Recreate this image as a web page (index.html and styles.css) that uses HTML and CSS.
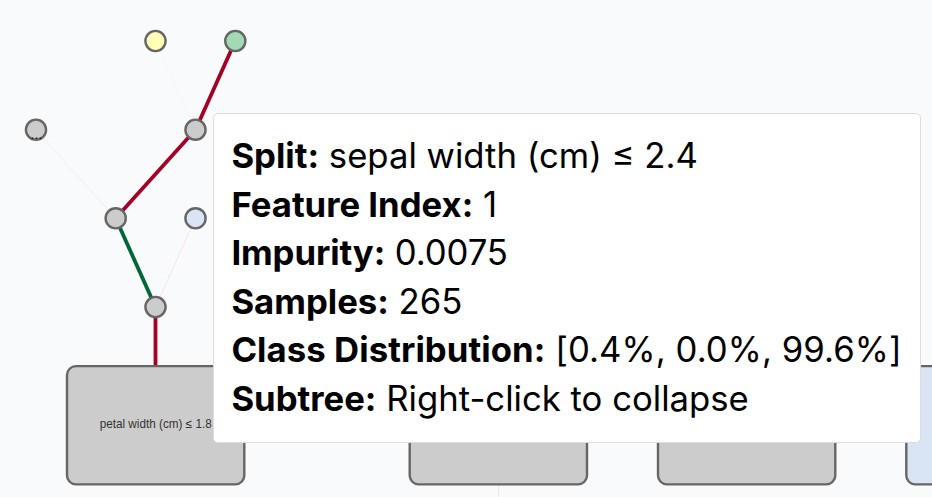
FILE: index.html
```html
<!DOCTYPE html>
<html lang="en">
<head>
<meta charset="utf-8">
<title>Decision tree</title>
<link rel="stylesheet" href="styles.css">
</head>
<body>
<svg class="tree" width="932" height="497" viewBox="0 0 932 497">
  <g class="faint">
    <path class="faintest" d="M155.5 41L195.5 129.7"/>
    <path d="M36 129.7L115.7 218.3"/>
    <path class="warm" d="M195.5 218.3L155.5 307"/>
    <path class="warm" d="M498.5 425V497"/>
  </g>
  <g class="path">
    <path d="M235.3 41L195.5 129.7L115.7 218.3"/>
    <path class="yes" d="M115.7 218.3L155.5 307"/>
    <path d="M155.5 307V425"/>
  </g>
  <g class="node">
    <circle class="yellow" cx="155.5" cy="41" r="10.1"/>
    <circle class="green" cx="235.3" cy="41" r="10.1"/>
    <circle cx="36" cy="129.7" r="10.1"/>
    <circle cx="195.5" cy="129.7" r="10.1"/>
    <circle cx="115.7" cy="218.3" r="10.1"/>
    <circle class="blue" cx="195.5" cy="218.3" r="10.1"/>
    <circle cx="155.5" cy="307" r="10.1"/>
    <rect x="67" y="366.1" width="177.3" height="118.3" rx="9"/>
    <rect x="409.7" y="366.1" width="177.3" height="118.3" rx="9"/>
    <rect x="658" y="366.1" width="177.3" height="118.3" rx="9"/>
    <rect class="blue" x="906.3" y="366.1" width="177.3" height="118.3" rx="9"/>
  </g>
  <text class="dots" x="36.4" y="138.6">...</text>
  <text class="label" x="155.7" y="428" textLength="112" lengthAdjust="spacingAndGlyphs">petal width (cm) ≤ 1.8</text>
</svg>
<div class="tooltip">
  <div><strong>Split:</strong> sepal width (cm) ≤ 2.4</div>
  <div><strong>Feature Index:</strong> 1</div>
  <div class="tight"><strong>Impurity:</strong> 0.0075</div>
  <div><strong>Samples:</strong> 265</div>
  <div class="loose"><strong>Class Distribution:</strong> [0.4%, 0.0%, 99.6%]</div>
  <div><strong>Subtree:</strong> Right-click to collapse</div>
</div>
</body>
</html>
```
FILE: styles.css
```css
body {
  margin: 0;
  position: relative;
  height: 497px;
  overflow: hidden;
  background: #f9fafc;
}
.tree { display: block; }
.faint { fill: none; stroke: #edf1f3; stroke-width: 1; }
.faint .faintest { stroke: #f4f6f8; }
.faint .warm { stroke: #f4e6ea; }
.path { fill: none; stroke: #a50026; stroke-width: 3.8; }
.path .yes { stroke: #006837; }
.node { fill: #ccc; stroke: #666; stroke-width: 2.4; }
.node .yellow { fill: #ffffb8; }
.node .green { fill: #a1dab4; }
.node .blue { fill: #d9e5f5; }
.label, .dots {
  font-family: "Liberation Sans", Arial, sans-serif;
  text-anchor: middle;
}
.label { font-size: 12.6px; fill: #333; }
.dots { font-size: 14px; fill: #111; }
.tooltip {
  position: absolute;
  left: 213px;
  top: 113px;
  box-sizing: border-box;
  width: 708px;
  height: 329.5px;
  padding: 17px 17.4px;
  border: 1.2px solid #ddd;
  border-radius: 5px;
  background: #fff;
  color: #000;
  font: 34.7px/48.6px Inter, sans-serif;
  white-space: nowrap;
}
.tooltip strong { font-weight: 700; }
.tooltip .tight { letter-spacing: -0.09px; }
.tooltip .loose { letter-spacing: 0.07px; }
```
